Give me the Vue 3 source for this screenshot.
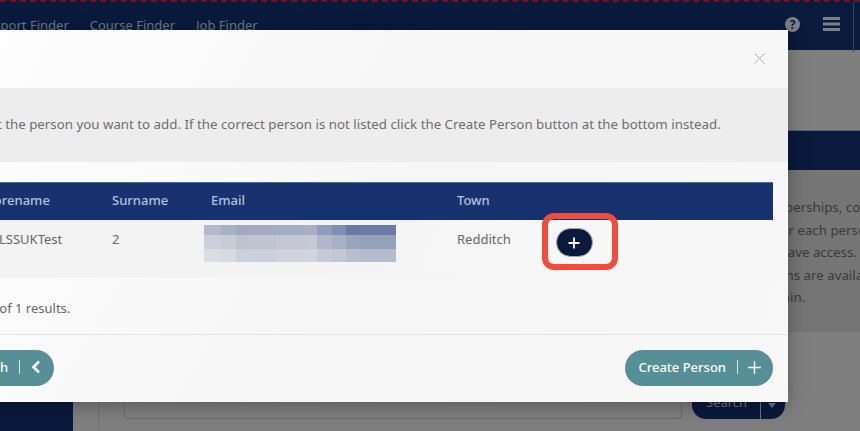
<script setup>
const navLinks = ['Passport Finder', 'Course Finder', 'Job Finder']
const columns = ['Forename', 'Surname', 'Email', 'Town']
const blurRows = [
  ['#b3b9cb', '#a9b1c5', '#a0a9c0', '#a3abc2', '#a5adc3', '#a8afc4', '#8f9cbc', '#7f8eb3', '#6a7aa6', '#6c7ba6'],
  ['#ccced9', '#c8ccd7', '#bdc2d0', '#c0c5d2', '#c3c7d3', '#c5c9d4', '#b0b7ca', '#a8b0c6', '#98a3bd', '#95a0bb'],
  ['#dcdde3', '#d8dae1', '#ccd0da', '#cdd0da', '#d0d3dc', '#d2d4dd', '#c6cad6', '#c2c7d4', '#b8bece', '#b5bccd']
]
const blurWidths = [17, 15, 12, 28, 29, 12, 15, 14, 14, 36]
const pageLines = ['Memberships, co', 'nts for each perso', 'you have access.', 'options are availa', 'r admin.']
</script>

<template>
  <div class="page">
    <header class="topbar">
      <nav class="nav">
        <a v-for="link in navLinks" :key="link">{{ link }}</a>
      </nav>
      <div class="top-icons">
        <span class="help">?</span>
        <svg class="burger" viewBox="0 0 17 14"><path d="M0 0h17v3H0zM0 5.500h17v3H0zM0 11h17v3H0z" /></svg>
        <span class="top-divider"></span>
      </div>
    </header>

    <div class="page-main">
      <aside class="sidebar"></aside>
      <div class="content">
        <div class="title-band"></div>
        <div class="navy-band"></div>
        <div class="info-text">
          <p v-for="line in pageLines" :key="line">{{ line }}</p>
        </div>
        <div class="search-card">
          <div class="search-input"></div>
          <div class="search-btn">
            <span>Search</span><i></i>
            <svg viewBox="0 0 8 5"><path d="M0 0h8L4 5z" /></svg>
          </div>
        </div>
      </div>
    </div>

    <div class="modal">
      <div class="modal-head">
        <svg class="close" viewBox="0 0 11 11"><path d="M.5.5l10 10M10.500.5l-10 10" /></svg>
      </div>
      <div class="notice">Please select the person you want to add. If the correct person is not listed click the Create Person button at the bottom instead.</div>
      <div class="modal-body">
        <div class="results">
          <div class="row head-row">
            <span v-for="col in columns" :key="col">{{ col }}</span>
          </div>
          <div class="row data-row">
            <span class="forename">LSSUKTest</span>
            <span>2</span>
            <span class="blur">
              <span v-for="(cells, r) in blurRows" :key="r" class="blur-line">
                <b v-for="(c, i) in cells" :key="i" :style="{ background: c, width: blurWidths[i] + 'px' }"></b>
              </span>
            </span>
            <span>Redditch</span>
            <span class="add-cell">
              <span class="callout">
                <button class="add-btn">
                  <svg viewBox="0 0 12 12"><path d="M6 .5v11M.5 6h11" /></svg>
                </button>
              </span>
            </span>
          </div>
        </div>
        <p class="count">Showing 1 to 1 of 1 results.</p>
      </div>
      <div class="modal-foot">
        <button class="pill">
          <span>Back to Search</span><i></i>
          <svg viewBox="0 0 10 14" class="chev"><path d="M8 1.500L2.500 7 8 12.500" /></svg>
        </button>
        <button class="pill">
          <span>Create Person</span><i></i>
          <svg viewBox="0 0 14 14" class="plus"><path d="M7 0v14M0 7h14" /></svg>
        </button>
      </div>
    </div>
  </div>
</template>

<style>
html, body { margin: 0; background: #808080; }
</style>

<style scoped>
.page {
  position: relative;
  width: 860px;
  height: 431px;
  overflow: hidden;
  background: #7f7f7f;
  font-family: "Noto Sans", "Open Sans", sans-serif;
}

.topbar {
  height: 50px;
  box-sizing: border-box;
  background: #0a1a3c;
  border-top: 2px dashed #6e1226;
  display: flex;
  justify-content: space-between;
  padding: 15px 6px 0 0;
}

.nav {
  display: flex;
  gap: 21px;
  margin: -1px 0 0 -27px;
  font-size: 13px;
  color: #6e7688;
}

.top-icons {
  display: flex;
  gap: 23px;
  align-items: flex-start;
}

.help {
  width: 15px;
  height: 15px;
  border-radius: 50%;
  background: #7b7f88;
  color: #0a1a3c;
  font-size: 12px;
  font-weight: 700;
  line-height: 15px;
  text-align: center;
}

.burger {
  width: 17px;
  height: 14px;
  fill: #7b7f88;
}

.top-divider {
  width: 1px;
  height: 50px;
  margin: -15px 0 0 -10px;
  background: #3a4560;
}

.page-main {
  display: flex;
  height: 381px;
}

.sidebar {
  width: 73px;
  flex-shrink: 0;
  background: #0a1a3c;
}

.content {
  flex: 1;
  min-width: 0;
}

.title-band {
  height: 81px;
  border-bottom: 1px solid #5a6478;
  box-sizing: border-box;
}

.navy-band {
  height: 39px;
  background: #0a1a3c;
}

.info-text {
  height: 162px;
  background: #757575;
  padding: 26px 0 0 680px;
  font-size: 13.300px;
  color: #3a3a3a;
  white-space: nowrap;
  overflow: hidden;
  box-sizing: border-box;
}

.info-text p {
  margin: 0;
  line-height: 22.500px;
}

.search-card {
  display: flex;
  gap: 10px;
  margin-left: 25px;
  padding: 71px 0 0 25px;
  border-left: 1px solid #707070;
  height: 99px;
  box-sizing: border-box;
}

.search-input {
  width: 558px;
  height: 16px;
  box-sizing: border-box;
  border: 1px solid #6a6a6a;
  border-top: 0;
  border-radius: 0 0 3px 3px;
}

.search-btn {
  width: 93px;
  height: 25px;
  margin-top: -9px;
  background: #0a1a3c;
  border-radius: 0 0 14px 14px;
  color: #6e7688;
  font-size: 13px;
  position: relative;
  padding-left: 14px;
  box-sizing: border-box;
  line-height: 17px;
}

.search-btn i {
  position: absolute;
  left: 68px;
  top: 0;
  bottom: 0;
  border-left: 1px solid #6e7688;
}

.search-btn svg {
  position: absolute;
  left: 76px;
  top: 9px;
  width: 8px;
  height: 5px;
  fill: #6e7688;
}

/* modal floats over the dimmed page */
.modal {
  position: absolute;
  top: 30px;
  left: -101px;
  width: 889px;
  height: 372px;
  background: linear-gradient(120deg, #fff, #f6f6f6 55%, #f8f8f8);
  box-shadow: 0 4px 18px rgba(0, 0, 0, 0.3);
  display: flex;
  flex-direction: column;
}

.modal-head {
  height: 58px;
  position: relative;
}

.close {
  position: absolute;
  right: 23px;
  top: 23px;
  width: 11px;
  height: 11px;
  stroke: #b5b5b5;
  fill: none;
}

.notice {
  height: 74px;
  box-sizing: border-box;
  padding: 27px 0 0 23px;
  background: #ededed;
  color: #6d6d6d;
  font-size: 13.300px;
  line-height: 18px;
  white-space: nowrap;
}

.modal-body {
  flex: 1;
  padding: 20px 15px 0 7px;
  border-bottom: 1px solid #e3e3e3;
}

.row {
  display: grid;
  grid-template-columns: 125px 99px 246px 86px 1fr;
  padding-left: 81px;
  font-size: 13px;
}

.head-row {
  height: 38px;
  line-height: 34px;
  background: #17326f;
  color: #b4c0de;
  font-weight: 500;
  border-top: 1px solid #4a68a3;
  box-sizing: border-box;
}

.data-row {
  height: 58px;
  padding-top: 6px;
  line-height: 26px;
  color: #666;
  box-sizing: border-box;
  background: linear-gradient(90deg, #f3f3f4 40%, rgba(243, 243, 244, 0) 70%);
}

.forename {
  padding-left: 12px;
}

.blur {
  display: block;
  margin: -1px 0 0 -7px;
}

.blur-line {
  display: flex;
  height: 14px;
}

.blur-line:first-child {
  height: 10px;
}

.blur-line:last-child {
  height: 13px;
}

.blur-line b {
  display: block;
  height: 100%;
}

.add-cell {
  display: block;
  position: relative;
}

/* red annotation box drawn over the row */
.callout {
  position: absolute;
  left: -1px;
  top: -13px;
  width: 76px;
  height: 57px;
  box-sizing: border-box;
  border: 6px solid #f24c3d;
  border-radius: 12px;
  padding-left: 8px;
  display: flex;
  align-items: center;
}

.add-btn {
  width: 37px;
  height: 29px;
  padding: 0 1px 0 0;
  margin-top: 2px;
  border: 1.500px solid #a8a8a8;
  border-radius: 15px;
  background: #0a1a3c;
  display: flex;
  align-items: center;
  justify-content: center;
}

.add-btn svg {
  width: 12px;
  height: 12px;
  stroke: #fff;
  stroke-width: 1.800;
  fill: none;
}

.count {
  margin: 21px 0 0;
  font-size: 13px;
  color: #666;
  line-height: 18px;
}

.modal-foot {
  height: 67px;
  flex-shrink: 0;
  display: flex;
  justify-content: space-between;
  align-items: flex-start;
  padding: 15px 15px 0 5px;
  box-sizing: border-box;
}

.pill {
  height: 36px;
  display: flex;
  align-items: center;
  gap: 11px;
  border: 0;
  border-radius: 18px;
  padding: 0 12px 2px 13px;
  background: #568f95;
  color: #fff;
  font-family: inherit;
  font-size: 13px;
  font-weight: 500;
}

.pill i {
  height: 14px;
  border-left: 1px solid #d6e5e6;
}

.chev {
  width: 10px;
  height: 14px;
  margin-right: 1px;
  stroke: #fff;
  stroke-width: 2.500;
  fill: none;
}

.plus {
  width: 13px;
  height: 13px;
  margin-left: -1px;
  stroke: #fff;
  stroke-width: 1.500;
  fill: none;
}
</style>
